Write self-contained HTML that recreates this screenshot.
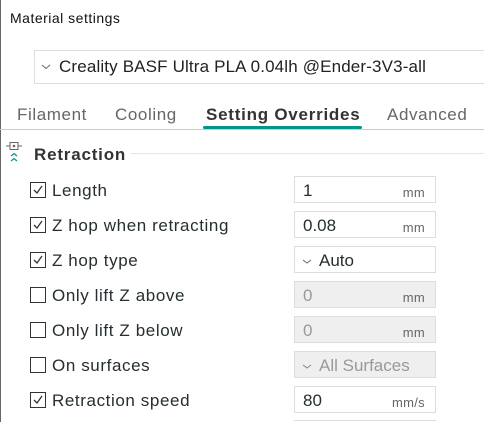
<!DOCTYPE html><html><head><style>
body{margin:0;width:484px;height:422px;background:#fff;font-family:"Liberation Sans",sans-serif;color:#262e30;position:relative;overflow:hidden}
.a{position:absolute;white-space:nowrap}
.cb{position:absolute;left:30px;width:14px;height:14px;border:1px solid #333;background:#fff}
.cb svg{position:absolute;left:1px;top:1px}
.lbl{position:absolute;left:52px;font-size:17px;letter-spacing:0.6px}
.in{position:absolute;left:294px;width:142px;height:27px;border:1px solid #ddd;box-sizing:border-box;background:#fff}
.in.d{background:#efefef;color:#999}
.in .v{position:absolute;left:8px;top:4px;font-size:17px}
.in .u{position:absolute;right:10px;top:8px;font-size:13px;color:#666;letter-spacing:0.3px}
</style></head><body>
<div class="a" style="left:0;top:0;width:1px;height:422px;background:#666"></div>
<div class="a" style="left:10px;top:10px;font-size:14px;color:#111;letter-spacing:0.5px">Material settings</div>
<div class="a" style="left:34px;top:50px;width:460px;height:34px;border:1px solid #ddd;box-sizing:border-box"></div>
<svg class="a" style="left:41px;top:64px" width="10" height="6"><path d="M1 1L5 4.5L9 1" stroke="#666" fill="none"/></svg>
<div class="a" style="left:59px;top:57px;font-size:17px;color:#222;letter-spacing:0.15px">Creality BASF Ultra PLA 0.04lh @Ender-3V3-all</div>
<div class="a" style="left:17px;top:105px;font-size:17px;color:#666;letter-spacing:0.6px">Filament</div>
<div class="a" style="left:115px;top:105px;font-size:17px;color:#666;letter-spacing:0.6px">Cooling</div>
<div class="a" style="left:206px;top:105px;font-size:17px;font-weight:bold;color:#333;letter-spacing:0.75px">Setting Overrides</div>
<div class="a" style="left:387px;top:105px;font-size:17px;color:#666;letter-spacing:0.6px">Advanced</div>
<div class="a" style="left:0;top:129px;width:484px;height:1px;background:#ccc"></div>
<div class="a" style="left:203px;top:126px;width:159px;height:3px;background:#009688;border-radius:2px"></div>
<svg class="a" style="left:5px;top:141px" width="18" height="24"><path d="M1 5H5M13 5H17" stroke="#666"/><rect x="5" y="1.5" width="8" height="7" fill="none" stroke="#666"/><circle cx="9" cy="5" r="1.3" fill="#666"/><path d="M6 15L9 12.5L12 15M6 20L9 17.5L12 20" stroke="#009688" fill="none" stroke-width="1.2"/></svg>
<div class="a" style="left:34px;top:145px;font-size:17px;font-weight:bold;color:#333;letter-spacing:0.8px">Retraction</div>
<div class="a" style="left:131px;top:153px;width:353px;height:1px;background:#e6e6e6"></div>

<div class="cb" style="top:182px"><svg width="12" height="12"><path d="M2 6L5 9L10 2" stroke="#333" fill="none" stroke-width="1.3"/></svg></div>
<div class="lbl" style="top:181px">Length</div>
<div class="in" style="top:176px"><span class="v">1</span><span class="u">mm</span></div>

<div class="cb" style="top:217px"><svg width="12" height="12"><path d="M2 6L5 9L10 2" stroke="#333" fill="none" stroke-width="1.3"/></svg></div>
<div class="lbl" style="top:216px">Z hop when retracting</div>
<div class="in" style="top:211px"><span class="v">0.08</span><span class="u">mm</span></div>

<div class="cb" style="top:252px"><svg width="12" height="12"><path d="M2 6L5 9L10 2" stroke="#333" fill="none" stroke-width="1.3"/></svg></div>
<div class="lbl" style="top:251px">Z hop type</div>
<div class="in" style="top:246px"><svg class="a" style="left:7px;top:12px" width="10" height="6"><path d="M1 1L5 4L9 1" stroke="#666" fill="none"/></svg><span class="v" style="left:24px">Auto</span></div>

<div class="cb" style="top:287px"></div>
<div class="lbl" style="top:286px">Only lift Z above</div>
<div class="in d" style="top:281px"><span class="v">0</span><span class="u">mm</span></div>

<div class="cb" style="top:322px"></div>
<div class="lbl" style="top:321px">Only lift Z below</div>
<div class="in d" style="top:316px"><span class="v">0</span><span class="u">mm</span></div>

<div class="cb" style="top:357px"></div>
<div class="lbl" style="top:356px">On surfaces</div>
<div class="in d" style="top:351px"><svg class="a" style="left:7px;top:12px" width="10" height="6"><path d="M1 1L5 4L9 1" stroke="#888" fill="none"/></svg><span class="v" style="left:24px">All Surfaces</span></div>

<div class="cb" style="top:392px"><svg width="12" height="12"><path d="M2 6L5 9L10 2" stroke="#333" fill="none" stroke-width="1.3"/></svg></div>
<div class="lbl" style="top:391px">Retraction speed</div>
<div class="in" style="top:386px"><span class="v">80</span><span class="u">mm/s</span></div>
<div class="a" style="left:294px;top:420px;width:142px;height:2px;border-top:1px solid #ddd"></div>
</body></html>
